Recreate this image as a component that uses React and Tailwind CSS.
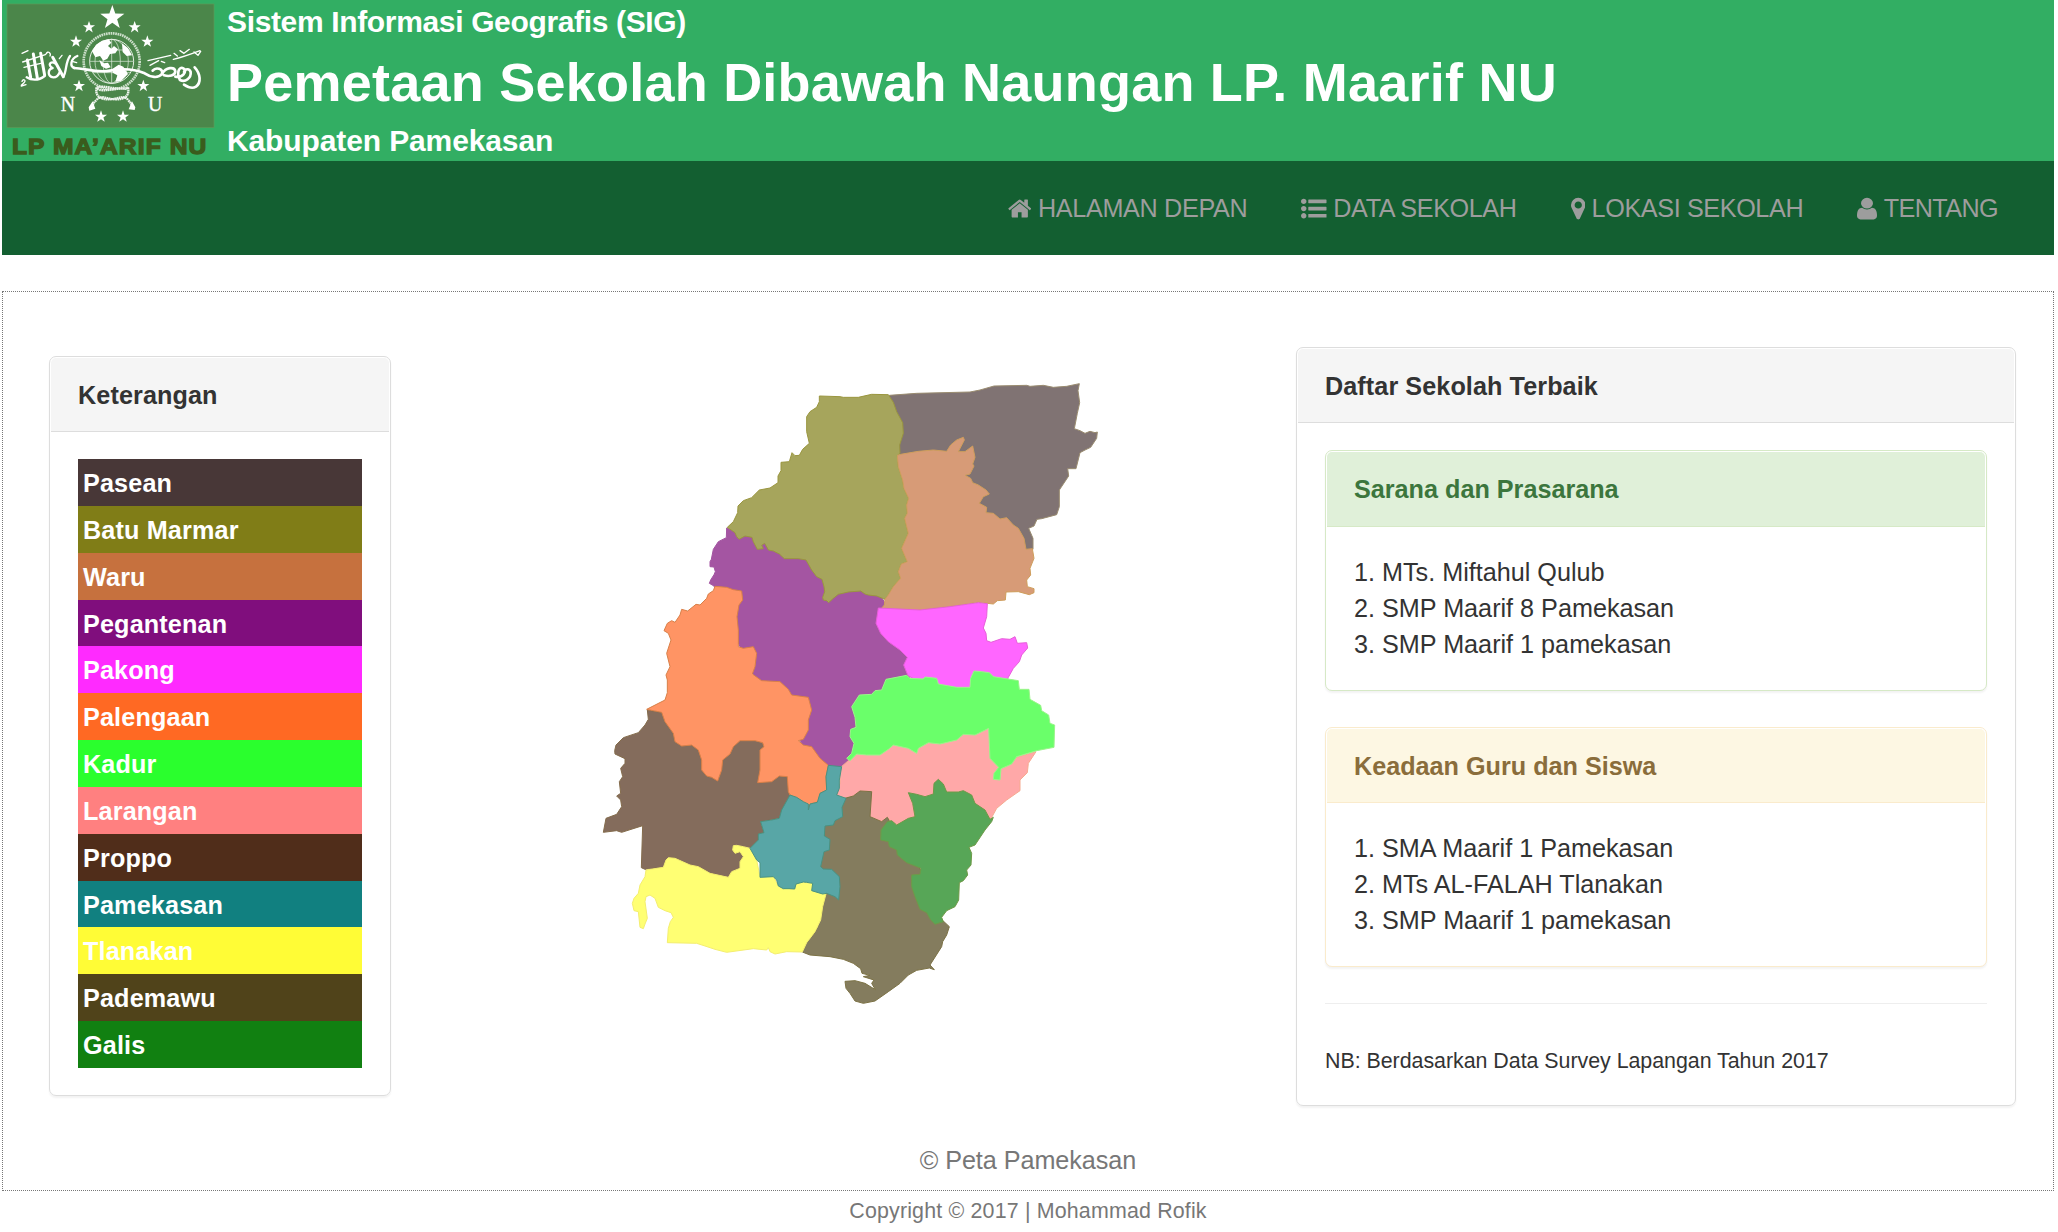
import React from "react";

const NAV = [
  {
    label: "HALAMAN DEPAN",
    width: "w-[23.5px]",
    tracking: "tracking-[-0.33px]",
    box: "64 0 1664 1792",
    path: "M1472 992v480q0 26-19 45t-45 19h-384v-384h-256v384h-384q-26 0-45-19t-19-45v-480q0-1 .5-3t.5-3l575-474 575 474q1 2 1 6zm223-69l-62 74q-8 9-21 11h-3q-13 0-21-7l-692-577-692 577q-12 8-24 7-13-2-21-11l-62-74q-8-10-7-23.5t11-21.5l719-599q32-26 76-26t76 26l244 204v-195q0-14 9-23t23-9h192q14 0 23 9t9 23v408l219 182q10 8 11 21.5t-7 23.5z",
  },
  {
    label: "DATA SEKOLAH",
    width: "w-[25.5px]",
    tracking: "tracking-[-0.4px]",
    box: "0 0 1792 1792",
    path: "M384 1408q0 80-56 136t-136 56-136-56-56-136 56-136 136-56 136 56 56 136zm0-512q0 80-56 136t-136 56-136-56-56-136 56-136 136-56 136 56 56 136zm1408 416v192q0 13-9.500 22.500t-22.500 9.500h-1216q-13 0-22.500-9.500t-9.500-22.500v-192q0-13 9.500-22.500t22.500-9.500h1216q13 0 22.500 9.500t9.500 22.500zm-1408-928q0 80-56 136t-136 56-136-56-56-136 56-136 136-56 136 56 56 136zm1408 416v192q0 13-9.500 22.500t-22.500 9.500h-1216q-13 0-22.500-9.500t-9.500-22.500v-192q0-13 9.500-22.500t22.500-9.500h1216q13 0 22.500 9.500t9.500 22.500zm0-512v192q0 13-9.500 22.500t-22.500 9.500h-1216q-13 0-22.500-9.500t-9.500-22.500v-192q0-13 9.500-22.500t22.500-9.500h1216q13 0 22.500 9.500t9.500 22.500z",
  },
  {
    label: "LOKASI SEKOLAH",
    width: "w-[14.5px]",
    tracking: "tracking-[-0.38px]",
    box: "384 0 1024 1792",
    path: "M1152 640q0-106-75-181t-181-75-181 75-75 181 75 181 181 75 181-75 75-181zm256 0q0 109-33 179l-364 774q-16 33-47.500 52t-67.500 19-67.500-19-46.500-52l-365-774q-33-70-33-179 0-212 150-362t362-150 362 150 150 362z",
  },
  {
    label: "TENTANG",
    width: "w-[20px]",
    tracking: "tracking-[-0.6px]",
    box: "256 0 1280 1792",
    path: "M1536 1399q0 109-62.500 187t-150.500 78h-854q-88 0-150.500-78t-62.500-187q0-85 8.500-160.500t31.500-152 58.500-131 94-89 134.500-34.500q131 128 313 128t313-128q76 0 134.500 34.500t94 89 58.500 131 31.500 152 8.500 160.500zm-256-887q0 159-112.500 271.500t-271.500 112.500-271.500-112.500-112.500-271.500 112.500-271.500 271.500-112.500 271.500 112.500 112.500 271.500z",
  },
];

const LEGEND = [
  ["Pasean", "bg-[#483737]"],
  ["Batu Marmar", "bg-[#807d17]"],
  ["Waru", "bg-[#c6713e]"],
  ["Pegantenan", "bg-[#800e7d]"],
  ["Pakong", "bg-[#ff2aff]"],
  ["Palengaan", "bg-[#ff6923]"],
  ["Kadur", "bg-[#2aff2d]"],
  ["Larangan", "bg-[#ff8080]"],
  ["Proppo", "bg-[#502d1a]"],
  ["Pamekasan", "bg-[#118080]"],
  ["Tlanakan", "bg-[#fffc36]"],
  ["Pademawu", "bg-[#50431a]"],
  ["Galis", "bg-[#118011]"],
];

const REGIONS = [
  {
    name: "Pegantenan", fill: "#a455a2", edge: "#a455a2",
    pts: "410,474 409,503 385,515 370,538 364,568 360,575 360,590 372,591 376,605 372,614 362,630 358,640 372,648 420,760 480,900 600,1050 650,1150 690,1180 715,1188 755,1190 785,1172 800,1100 830,1010 955,925 966,917 960,900 950,885 965,860 940,830 900,800 890,713 880,690 855,660 740,600 690,590 620,540 540,500 470,480 430,482",
  },
  {
    name: "Pasean", fill: "#807373", edge: "#9a8c70",
    pts: "898,76 980,70 1140,66 1170,60 1212,48 1310,46 1320,49 1360,46 1390,52 1430,49 1468,41 1464,62 1469,98 1462,130 1453,176 1470,182 1485,190 1500,184 1515,188 1522,186 1520,205 1502,232 1485,240 1470,248 1458,296 1433,296 1436,318 1408,360 1408,410 1400,434 1355,446 1341,448 1332,468 1316,475 1329,505 1329,538 1305,538 1200,480 1100,340 1060,260 930,262 920,200",
  },
  {
    name: "Batu Marmar", fill: "#a6a55c", edge: "#9a963f",
    pts: "412,472 430,455 443,428 444,408 460,392 485,383 508,360 540,354 564,338 564,318 573,302 573,277 598,275 606,248 615,257 628,256 638,238 658,220 650,185 650,140 660,125 680,112 688,95 688,78 750,80 760,82 805,82 845,73 895,74 910,97 920,125 938,158 940,190 929,225 930,250 922,256 925,290 938,330 942,355 956,385 950,405 952,430 944,445 955,490 935,535 952,575 934,582 925,605 932,625 910,650 895,675 885,688 860,678 835,675 825,672 812,663 775,666 745,673 730,685 716,698 710,692 700,690 698,682 704,665 702,650 696,628 680,620 665,600 648,570 625,566 583,566 568,552 550,543 535,540 532,534 524,520 515,526 520,536 502,538 490,515 486,502 465,498 447,508 440,500 435,488",
  },
  {
    name: "Waru", fill: "#d79b77", edge: "#cf9e5c",
    pts: "922,256 932,253 985,244 1030,240 1070,244 1082,225 1100,210 1120,202 1123,210 1105,245 1125,245 1148,228 1155,262 1148,282 1152,288 1140,312 1125,316 1142,325 1148,338 1165,345 1188,360 1198,372 1180,380 1168,400 1190,412 1188,428 1210,430 1230,447 1250,443 1270,465 1285,475 1302,505 1308,538 1327,536 1332,565 1320,595 1322,615 1310,630 1312,650 1332,656 1332,668 1318,674 1285,665 1248,666 1246,690 1222,692 1210,702 1165,697 1080,710 990,720 872,718 883,705 885,688 895,675 910,650 932,625 925,605 934,582 952,575 935,535 955,490 944,445 952,430 950,405 956,385 942,355 938,330 925,290",
  },
  {
    name: "Pakong", fill: "#ff66ff", edge: "#e75fd9",
    pts: "865,714 990,720 1080,710 1165,698 1192,701 1190,740 1180,774 1188,790 1190,812 1203,817 1235,806 1260,808 1275,800 1282,820 1310,818 1313,834 1295,855 1288,875 1270,895 1255,922 1240,970 1050,970 954,917 941,885 952,862 930,840 895,815 872,790 858,760",
  },
  {
    name: "Larangan", fill: "#ffa8a8", edge: "#f6aa90",
    pts: "802,1153 860,1120 1000,1090 1150,1070 1200,1060 1220,1180 1338,1145 1315,1180 1312,1208 1290,1230 1290,1262 1250,1290 1220,1315 1202,1348 1150,1340 1060,1260 1000,1300 970,1345 920,1364 905,1355 892,1342 875,1355 840,1340 842,1308 845,1265 810,1263 790,1278 765,1285 738,1275 750,1240 752,1192 775,1172",
  },
  {
    name: "Kadur", fill: "#6aff6a", edge: "#9af58a",
    pts: "808,975 845,973 855,962 875,960 888,928 950,916 960,925 1000,927 1005,921 1040,925 1045,942 1100,952 1140,952 1142,925 1152,903 1175,905 1198,908 1210,920 1285,932 1288,958 1317,958 1320,988 1352,1006 1355,1022 1376,1035 1380,1060 1394,1065 1392,1132 1340,1142 1280,1160 1265,1182 1233,1196 1230,1230 1210,1228 1212,1210 1226,1192 1200,1165 1196,1075 1155,1095 1120,1093 1100,1110 1050,1122 1015,1118 985,1135 980,1150 955,1135 910,1125 895,1138 870,1155 830,1155 800,1152 780,1172 770,1165 785,1150 792,1120 780,1100 782,1078 798,1072 795,1042 785,1010",
  },
  {
    name: "Proppo", fill: "#846c5c", edge: "#846c4c",
    pts: "172,1020 215,1027 300,1060 430,1090 520,1110 600,1200 608,1272 580,1320 568,1345 512,1355 522,1388 505,1392 505,1410 480,1435 470,1480 425,1515 415,1522 360,1510 325,1490 300,1485 255,1465 235,1463 220,1492 165,1498 154,1493 158,1367 95,1387 80,1382 40,1387 48,1345 80,1333 95,1310 92,1290 80,1278 92,1270 88,1235 98,1220 92,1195 105,1180 105,1166 75,1152 74,1142 78,1125 100,1103 145,1088 165,1065 175,1048",
  },
  {
    name: "Palengaan", fill: "#ff9464", edge: "#d88048",
    pts: "375,649 410,652 430,659 455,663 458,690 447,705 441,740 445,780 445,830 460,835 490,830 500,850 495,890 487,912 515,932 570,935 595,958 605,975 655,982 665,1020 655,1050 655,1080 640,1108 625,1112 640,1125 665,1130 690,1165 715,1186 708,1220 710,1260 690,1270 685,1295 660,1302 655,1320 640,1295 600,1275 595,1265 592,1220 568,1218 545,1235 503,1238 510,1200 510,1140 522,1130 518,1118 495,1112 450,1112 430,1130 420,1152 398,1170 395,1200 383,1233 365,1222 350,1218 335,1200 335,1170 325,1140 305,1125 275,1128 255,1115 250,1090 225,1055 215,1027 170,1018 225,990 232,968 232,930 228,915 240,890 230,850 243,810 235,790 222,782 232,760 245,752 255,757 270,735 275,718 293,723 318,703 330,705 350,685 355,672 370,662",
  },
  {
    name: "Pademawu", fill: "#847c5e", edge: "#7c7245",
    pts: "765,1285 790,1278 810,1263 845,1265 840,1340 875,1355 892,1342 900,1356 970,1430 1010,1560 1040,1640 1062,1655 1078,1670 1070,1695 1058,1715 1055,1730 1020,1785 1033,1799 1018,1794 980,1801 955,1815 930,1840 895,1865 855,1893 820,1900 795,1893 780,1870 768,1855 765,1834 795,1832 825,1840 856,1859 845,1840 852,1830 820,1820 840,1816 816,1810 812,1796 790,1780 760,1768 720,1760 660,1755 637,1746 640,1730 665,1700 685,1670 698,1600 709,1568 735,1570 700,1500 685,1480 695,1430 690,1365 735,1330",
  },
  {
    name: "Galis", fill: "#57a657", edge: "#6f9a48",
    pts: "955,1268 980,1273 1005,1280 1030,1272 1032,1240 1045,1228 1060,1242 1070,1266 1105,1266 1120,1262 1145,1275 1155,1300 1185,1320 1200,1348 1210,1342 1205,1355 1185,1380 1155,1425 1137,1432 1145,1450 1143,1485 1130,1500 1133,1515 1120,1532 1108,1538 1106,1590 1095,1610 1070,1622 1055,1642 1060,1655 1035,1663 1022,1650 1010,1628 990,1618 975,1580 965,1550 965,1515 990,1513 993,1495 950,1478 922,1455 920,1440 898,1430 895,1415 872,1410 873,1380 892,1355 905,1352 920,1365 955,1345 975,1340 968,1300",
  },
  {
    name: "Tlanakan", fill: "#ffff73", edge: "#f4ee70",
    pts: "168,1500 220,1492 228,1470 235,1463 255,1465 300,1485 325,1490 360,1510 415,1522 425,1505 450,1495 450,1475 460,1460 450,1445 435,1450 428,1440 430,1427 440,1426 460,1430 480,1435 500,1470 510,1520 550,1518 563,1545 580,1558 585,1550 596,1550 600,1558 615,1557 618,1542 630,1536 668,1540 675,1555 708,1572 698,1610 692,1650 675,1685 650,1718 637,1746 590,1745 555,1752 540,1745 535,1733 530,1740 490,1736 410,1747 375,1738 345,1728 320,1720 232,1718 235,1675 241,1655 250,1642 243,1628 225,1622 205,1612 195,1585 180,1575 168,1580 165,1595 172,1645 165,1662 160,1676 150,1672 145,1625 132,1622 127,1600 132,1585 145,1570 150,1545 165,1520",
  },
  {
    name: "Pamekasan", fill: "#58a6a6", edge: "#4a9282",
    pts: "715,1186 755,1190 748,1230 748,1255 740,1275 768,1285 756,1312 758,1340 735,1352 730,1365 705,1368 703,1398 720,1408 718,1440 702,1445 692,1490 700,1497 725,1498 748,1520 750,1550 746,1590 735,1580 710,1570 698,1572 665,1562 668,1540 650,1537 640,1536 618,1542 614,1557 600,1556 580,1556 565,1548 560,1530 550,1520 510,1522 510,1478 500,1470 480,1435 505,1410 505,1392 522,1388 512,1355 545,1350 568,1345 575,1320 600,1275 620,1282 640,1295 655,1302 655,1320 660,1302 682,1297 690,1270 710,1260 708,1220",
  },
];

const STARS = [
  [337, 53, 38], [267, 82, 19], [404, 82, 19], [228, 125, 19], [442, 125, 19],
  [237, 258, 19], [430, 258, 19], [303, 350, 19], [369, 350, 19],
];

const star = (cx, cy, r) =>
  Array.from({ length: 10 }, (_, i) => {
    const a = (Math.PI / 5) * i - Math.PI / 2;
    const d = i % 2 ? r * 0.4 : r;
    return `${(cx + d * Math.cos(a)).toFixed(1)},${(cy + d * Math.sin(a)).toFixed(1)}`;
  }).join(" ");

function Logo() {
  return (
    <svg viewBox="6 0 639 483" className="h-[161px] w-[213px] shrink-0">
      <rect x="21" y="12" width="621" height="371" fill="#4b864a" stroke="#5d9a58" strokeWidth="2" />
      <g fill="#fff">
        {STARS.map(([x, y, r]) => (
          <polygon key={`${x}-${y}`} points={star(x, y, r)} />
        ))}
      </g>
      <g fill="none" stroke="#e4eee2">
        <circle cx="335" cy="184" r="84" strokeWidth="8" strokeDasharray="5 2" opacity="0.85" />
        <circle cx="335" cy="184" r="66" strokeWidth="3" />
        <g strokeWidth="2">
          <ellipse cx="335" cy="184" rx="26" ry="66" />
          <ellipse cx="335" cy="184" rx="50" ry="66" />
          <path d="M335 118V250M269 184H401M279 150H391M279 218H391" />
        </g>
      </g>
      <path fill="#fff" d="M276 154L288 134 306 122 326 118 334 128 324 138 334 146 342 138 354 148 346 160 330 162 322 176 310 182 300 168 286 172ZM298 180L312 190 324 188 332 202 318 206 304 198ZM338 206L356 194 370 200 384 222 364 242 346 246 352 226 338 218ZM366 130L384 144 396 166 380 168 368 156Z" />
      <g fill="none" stroke="#fff" strokeLinecap="round" strokeLinejoin="round">
        <path strokeWidth="8" d="M222 204C254 204 290 220 330 212C370 204 400 206 434 220C452 232 474 236 486 222" />
        <path strokeWidth="8" d="M486 222C490 206 468 200 458 212M486 222C498 200 524 200 526 214C526 228 506 230 492 226" />
        <path strokeWidth="8" d="M526 230C548 234 562 216 550 205C538 198 528 218 540 240C556 248 574 234 572 216C568 204 556 206 552 216M584 202C602 222 604 248 588 260C578 266 564 262 552 254" />
        <path strokeWidth="4" d="M444 182L512 166M520 178C548 172 574 162 600 152M522 160L532 168M540 152L552 160L568 148M582 156L594 166L602 154M450 196L476 182M484 184L494 188" />
        <path strokeWidth="9" d="M82 180L92 232M100 162L112 234M122 160L134 226M158 172L190 230" />
        <path strokeWidth="7" d="M190 230C200 216 196 186 210 168M134 228C114 244 92 240 80 232M166 190C150 182 142 196 158 204C142 208 142 230 160 232C172 232 176 226 180 214M232 168C212 176 208 200 224 204" />
        <path strokeWidth="4" d="M68 186L136 164M72 202L122 190M66 160L84 152M138 162C144 150 154 160 150 168M178 176L186 166M64 258L78 254M66 244C70 236 80 240 72 248L64 256M216 184L230 188" />
      </g>
      <g fill="none" stroke="#edf3ec" strokeWidth="7" strokeDasharray="5 1.500">
        <path d="M290 262C284 286 300 300 330 298C356 296 374 284 384 300C396 312 394 314 396 320M384 262C390 286 374 300 344 298C318 296 300 284 290 300C280 308 280 312 276 320M292 262C312 254 360 274 384 262M292 266C310 280 356 258 382 268" />
      </g>
      <path fill="#fff" d="M278 304L286 326 268 332 266 322ZM396 304L406 322 404 330 386 328Z" />
      <g fill="#fff" fontFamily="Liberation Serif, serif" fontSize="62" stroke="#fff">
        <text x="182" y="333" textLength="43" lengthAdjust="spacingAndGlyphs">N</text>
        <text x="444" y="333" textLength="43" lengthAdjust="spacingAndGlyphs">U</text>
      </g>
      <text x="36" y="461" fill="#3a5c1d" stroke="#3a5c1d" strokeWidth="4" fontFamily="Liberation Sans, Arial, sans-serif" fontWeight="700" fontSize="67" letterSpacing="3" textLength="586" lengthAdjust="spacingAndGlyphs">
        LP MA’ARIF NU
      </text>
    </svg>
  );
}

function RegionMap() {
  return (
    <svg viewBox="0 0 1620 1950" className="mt-[13px] ml-[199px] h-[650px] w-[540px] shrink-0" role="img" aria-label="Peta Pamekasan">
      {REGIONS.map((r) => (
        <polygon key={r.name} points={r.pts} fill={r.fill} stroke={r.edge} strokeWidth="3" strokeLinejoin="round" />
      ))}
    </svg>
  );
}

function SchoolPanel({ title, items, border, head, className }) {
  return (
    <div className={`rounded-[7px] border bg-white p-px shadow-[0_2px_2px_rgba(0,0,0,0.05)] ${border} ${className}`}>
      <div className={`rounded-t-[5px] border-b px-[27px] font-bold ${border} ${head}`}>{title}</div>
      <ol className="pt-[27px] pl-[27px] leading-9 text-[#333]">
        {items.map((item, i) => (
          <li key={i}>{`${i + 1}. ${item}`}</li>
        ))}
      </ol>
    </div>
  );
}

export default function App() {
  return (
    <div className="h-[1232px] w-[2058px] overflow-hidden bg-white px-[2px] font-['Liberation_Sans',Arial,sans-serif] text-[25.2px] text-[#333]">
      <header className="flex h-[161px] w-[2052px] bg-[#32ae63] text-white">
        <Logo />
        <div className="flex flex-col pt-[5px] pl-[12px] font-bold whitespace-nowrap">
          <div className="text-[30px] leading-[33px] tracking-[-0.35px]">Sistem Informasi Geografis (SIG)</div>
          <h1 className="mt-[13.5px] text-[54px] leading-[60px] tracking-[0.23px]">Pemetaan Sekolah Dibawah Naungan LP. Maarif NU</h1>
          <div className="mt-[12.5px] text-[30px] leading-[33px] tracking-[-0.12px]">Kabupaten Pamekasan</div>
        </div>
      </header>

      <nav className="flex h-[94px] w-[2052px] items-center justify-end gap-[54px] bg-[#135f31] pt-[2px] pr-[56px] whitespace-nowrap text-[#9d9d9d]">
        {NAV.map((item) => (
          <a key={item.label} className={`flex items-center gap-[6.5px] ${item.tracking}`}>
            <svg viewBox={item.box} preserveAspectRatio="none" className={`h-[25.2px] shrink-0 ${item.width}`} fill="currentColor">
              <path d={item.path} />
            </svg>
            <span>{item.label}</span>
          </a>
        ))}
      </nav>

      <main className="mt-[36px] flex h-[900px] w-[2052px] flex-col border border-dotted border-[#777]">
        <div className="flex h-[815px] items-start">
          <aside className="mt-[64px] ml-[46px] h-[740px] w-[342px] shrink-0 rounded-[7px] border border-[#ddd] p-px shadow-[0_2px_2px_rgba(0,0,0,0.05)]">
            <div className="h-[74px] rounded-t-[5px] border-b border-[#ddd] bg-[#f5f5f5] pl-[27px] leading-[74px] font-bold tracking-[0.1px]">Keterangan</div>
            <ul className="mt-[27px] ml-[27px] w-[284px]">
              {LEGEND.map(([name, bg]) => (
                <li key={name} className={`h-[46.850px] pl-[5px] leading-[49.5px] font-bold tracking-[0.15px] text-white ${bg}`}>
                  {name}
                </li>
              ))}
            </ul>
          </aside>

          <div className="mt-[65px] flex w-[905px] shrink-0">
            <RegionMap />
          </div>

          <section className="mt-[55px] h-[759px] w-[720px] shrink-0 rounded-[7px] border border-[#ddd] p-px shadow-[0_2px_2px_rgba(0,0,0,0.05)]">
            <div className="h-[74px] rounded-t-[5px] border-b border-[#ddd] bg-[#f5f5f5] pl-[27px] leading-[75px] font-bold tracking-[0.08px]">Daftar Sekolah Terbaik</div>
            <div className="px-[27px] pt-[27px]">
              <SchoolPanel
                title="Sarana dan Prasarana"
                items={["MTs. Miftahul Qulub", "SMP Maarif 8 Pamekasan", "SMP Maarif 1 pamekasan"]}
                border="border-[#d6e9c6]"
                head="h-[75px] leading-[74px] bg-[#e0f0d9] text-[#3c763d]"
                className="h-[241px]"
              />
              <SchoolPanel
                title="Keadaan Guru dan Siswa"
                items={["SMA Maarif 1 Pamekasan", "MTs AL-FALAH Tlanakan", "SMP Maarif 1 pamekasan"]}
                border="border-[#faebcc]"
                head="h-[74px] leading-[74px] bg-[#fdf7e3] text-[#8a6d3b]"
                className="mt-[36px] h-[240px]"
              />
              <hr className="mt-[36px] border-t border-[#eee]" />
              <p className="mt-[39px] text-[21.400px] leading-9 tracking-[-0.03px]">NB: Berdasarkan Data Survey Lapangan Tahun 2017</p>
            </div>
          </section>
        </div>
        <p className="mt-[35px] text-center leading-9 tracking-[-0.05px] text-[#777]">© Peta Pamekasan</p>
      </main>
      <footer className="w-[2052px] pt-[2px] text-center text-[21.400px] leading-9 tracking-[0.17px] text-[#777]">Copyright © 2017 | Mohammad Rofik</footer>
    </div>
  );
}
